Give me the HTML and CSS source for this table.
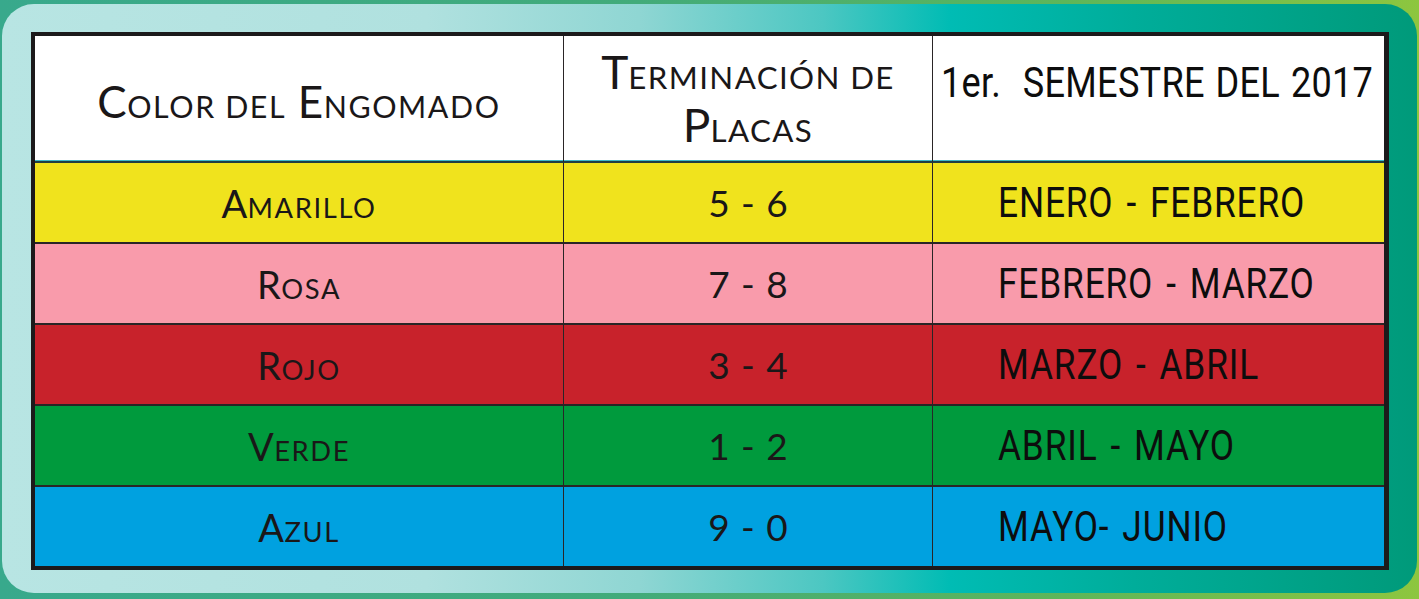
FILE: index.html
```html
<!DOCTYPE html>
<html lang="es">
<head>
<meta charset="utf-8">
<title>Engomado</title>
<link rel="stylesheet" href="styles.css">
</head>
<body>
<div class="panel">
  <div class="grid">
    <div class="cell head c1"><span class="sc head-left">C<span class="sm">olor del</span> E<span class="sm">ngomado</span></span></div>
    <div class="cell head c2"><span class="sc head-mid">T<span class="sm">erminación de</span><br>P<span class="sm">lacas</span></span></div>
    <div class="cell head c3"><span class="cond head-right">1er.&nbsp; SEMESTRE DEL 2017</span></div>

    <div class="cell yellow c1"><span class="sc label">A<span class="sm">marillo</span></span></div>
    <div class="cell yellow c2"><span class="num">5 - 6</span></div>
    <div class="cell yellow c3"><span class="cond month">ENERO - FEBRERO</span></div>

    <div class="cell pink c1"><span class="sc label">R<span class="sm">osa</span></span></div>
    <div class="cell pink c2"><span class="num">7 - 8</span></div>
    <div class="cell pink c3"><span class="cond month">FEBRERO - MARZO</span></div>

    <div class="cell red c1"><span class="sc label">R<span class="sm">ojo</span></span></div>
    <div class="cell red c2"><span class="num">3 - 4</span></div>
    <div class="cell red c3"><span class="cond month">MARZO - ABRIL</span></div>

    <div class="cell green c1"><span class="sc label">V<span class="sm">erde</span></span></div>
    <div class="cell green c2"><span class="num">1 - 2</span></div>
    <div class="cell green c3"><span class="cond month">ABRIL - MAYO</span></div>

    <div class="cell blue c1 last"><span class="sc label">A<span class="sm">zul</span></span></div>
    <div class="cell blue c2 last"><span class="num">9 - 0</span></div>
    <div class="cell blue c3 last"><span class="cond month">MAYO- JUNIO</span></div>
  </div>
</div>
</body>
</html>
```

FILE: styles.css
```css
html, body {
  margin: 0;
  padding: 0;
}
body {
  width: 1419px;
  height: 599px;
  overflow: hidden;
  background: linear-gradient(90deg, #38a98c 0%, #42ab7a 45%, #5db65a 75%, #8dc63f 100%);
  color: #1a1a1a;
}
.panel {
  box-sizing: border-box;
  margin: 4px 0 0 2px;
  width: 1415px;
  height: 589px;
  border-radius: 32px;
  padding: 28px 28px 23px 29px;
  background: linear-gradient(90deg, #b8e5e3 0%, #b0e1df 30%, #8fd6d3 45%, #4cc7c2 58%, #00bcb4 67%, #00ad9a 80%, #009a7a 100%);
}
.grid {
  box-sizing: border-box;
  width: 1358px;
  height: 538px;
  border: 4px solid #1c1a1b;
  border-right-width: 5px;
  display: grid;
  grid-template-columns: 529px 369px 1fr;
  grid-template-rows: 127px repeat(4, 81px) 1fr;
}
.cell {
  box-sizing: border-box;
  border-bottom: 2px solid #2a2526;
  display: flex;
  align-items: center;
  justify-content: center;
  min-width: 0;
}
.cell.last { border-bottom: none; }
.c1, .c2 { border-right: 1px solid #2a2526; }
.c3 {
  justify-content: flex-start;
  padding-left: 65px;
}
.head { background: #ffffff; border-bottom: 2px solid #1f3f44; box-shadow: inset 0 -1px 0 #3fb8c8; }
.head.c3 {
  align-items: flex-start;
  padding-left: 8px;
  padding-top: 21px;
}
.yellow { background: #f0e31d; }
.pink { background: #f99bab; }
.red { background: #c8222b; }
.green { background: #009a3d; }
.blue { background: #00a1e0; }

.sc {
  font-family: "Lato", "Open Sans", sans-serif;
  color: #1a1718;
}
.sm {
  text-transform: uppercase;
}
.head-left {
  font-size: 44px;
  letter-spacing: 0.4px;
  padding-top: 4px;
}
.head-left .sm { font-size: 0.69em; letter-spacing: 1.6px; }
.head-mid {
  font-size: 46px;
  line-height: 48px;
  text-align: center;
  padding-top: 4px;
}
.head-mid .sm { font-size: 0.68em; letter-spacing: 1.4px; }
.label {
  font-size: 38px;
  letter-spacing: 0.5px;
}
.label .sm { font-size: 0.72em; letter-spacing: 1.6px; }
.num {
  font-family: "Lato", "Open Sans", sans-serif;
  font-size: 37px;
  color: #1a1718;
  word-spacing: 2px;
}
.cond {
  font-family: "Roboto", "Liberation Sans", sans-serif;
  color: #0d0d0d;
  display: inline-block;
  transform: scaleX(0.84);
  transform-origin: left center;
  white-space: nowrap;
  letter-spacing: 1px;
  word-spacing: 4px;
}
.month {
  font-size: 42px;
}
.cond.head-right {
  font-size: 43px;
  letter-spacing: 0.3px;
  word-spacing: 2px;
}
```
